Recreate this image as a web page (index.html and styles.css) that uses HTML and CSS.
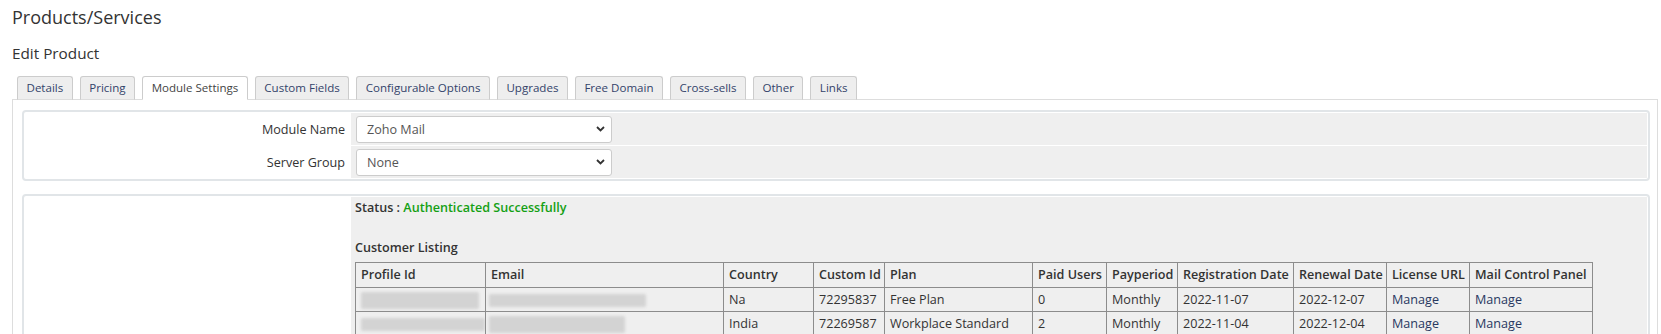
FILE: index.html
```html
<!DOCTYPE html>
<html lang="en">
<head>
<meta charset="utf-8">
<title>Products/Services - Edit Product</title>
<link rel="stylesheet" href="styles.css">
</head>
<body>
  <h1 class="page-title">Products/Services</h1>
  <h2 class="page-subtitle">Edit Product</h2>

  <div class="tabs">
    <a class="tab">Details</a>
    <a class="tab">Pricing</a>
    <a class="tab active">Module Settings</a>
    <a class="tab">Custom Fields</a>
    <a class="tab">Configurable Options</a>
    <a class="tab">Upgrades</a>
    <a class="tab">Free Domain</a>
    <a class="tab">Cross-sells</a>
    <a class="tab">Other</a>
    <a class="tab">Links</a>
  </div>

  <div class="panel">
    <div class="form-box">
      <div class="field-label">Module Name</div>
      <div class="field-area">
        <div class="select">
          <span>Zoho Mail</span>
          <svg class="chev" width="9" height="6" viewBox="0 0 9 6"><path d="M1 1 L4.5 4.5 L8 1" fill="none" stroke="#333" stroke-width="1.8"/></svg>
        </div>
      </div>
      <div class="field-label">Server Group</div>
      <div class="field-area">
        <div class="select">
          <span>None</span>
          <svg class="chev" width="9" height="6" viewBox="0 0 9 6"><path d="M1 1 L4.5 4.5 L8 1" fill="none" stroke="#333" stroke-width="1.8"/></svg>
        </div>
      </div>
    </div>

    <div class="form-box second">
      <div class="field-label"></div>
      <div class="field-area content-area">
        <div class="status">Status : <span class="ok">Authenticated Successfully</span></div>
        <div class="listing-title">Customer Listing</div>
        <table class="listing">
          <colgroup>
            <col style="width:130px"><col style="width:238px"><col style="width:90px"><col style="width:71px">
            <col style="width:148px"><col style="width:74px"><col style="width:71px"><col style="width:116px">
            <col style="width:93px"><col style="width:83px"><col style="width:123px">
          </colgroup>
          <thead>
            <tr>
              <th>Profile Id</th><th>Email</th><th>Country</th><th>Custom Id</th><th>Plan</th>
              <th>Paid Users</th><th>Payperiod</th><th>Registration Date</th><th>Renewal Date</th>
              <th>License URL</th><th>Mail Control Panel</th>
            </tr>
          </thead>
          <tbody>
            <tr>
              <td><span class="blur b1"></span></td>
              <td class="tight"><span class="blur b2"></span></td>
              <td>Na</td><td>72295837</td><td>Free Plan</td><td>0</td><td>Monthly</td>
              <td>2022-11-07</td><td>2022-12-07</td><td><a class="lnk">Manage</a></td><td><a class="lnk">Manage</a></td>
            </tr>
            <tr>
              <td><span class="blur b3"></span></td>
              <td class="tight"><span class="blur b4"></span></td>
              <td>India</td><td>72269587</td><td>Workplace Standard</td><td>2</td><td>Monthly</td>
              <td>2022-11-04</td><td>2022-12-04</td><td><a class="lnk">Manage</a></td><td><a class="lnk">Manage</a></td>
            </tr>
          </tbody>
        </table>
      </div>
    </div>
  </div>
</body>
</html>
```

FILE: styles.css
```css
html, body {
  margin: 0;
  background: #ffffff;
}
body {
  padding: 0 3px 0 12px;
  font-family: "Open Sans", "DejaVu Sans", sans-serif;
  color: #333333;
  overflow: hidden;
}
.page-title {
  margin: 5px 0 0 0;
  font-size: 18px;
  font-weight: 400;
  line-height: 24px;
  color: #333333;
}
.page-subtitle {
  margin: 14px 0 0 0;
  font-size: 15.3px;
  font-weight: 400;
  line-height: 20px;
  color: #333333;
}
.tabs {
  display: flex;
  gap: 7px;
  margin-top: 13px;
  padding-left: 5px;
  position: relative;
  z-index: 1;
  margin-bottom: -1px;
}
.tab {
  display: block;
  height: 24px;
  box-sizing: border-box;
  padding: 3px 8.5px 0 8.5px;
  font-size: 11.55px;
  line-height: 16.7px;
  color: #33436a;
  background: #eeeeee;
  border: 1px solid #cccccc;
  border-bottom: 1px solid #dddddd;
  border-radius: 3px 3px 0 0;
  white-space: nowrap;
}
.tab.active {
  background: #ffffff;
  color: #444444;
  border-bottom-color: #ffffff;
}
.panel {
  border: 1px solid #dddddd;
  padding: 10px 7px 0 9px;
  height: 400px;
}
.form-box {
  display: grid;
  grid-template-columns: 324px 1fr;
  column-gap: 2px;
  row-gap: 1px;
  grid-auto-rows: 32px;
  border: 2px solid #e1e5e8;
  border-radius: 4px;
  padding: 1px;
}
.form-box.second {
  margin-top: 13px;
  grid-auto-rows: auto;
}
.field-label {
  display: flex;
  align-items: center;
  justify-content: flex-end;
  padding-right: 4px;
  font-size: 12.6px;
  color: #333333;
  background: #ffffff;
}
.field-area {
  display: flex;
  align-items: center;
  padding-left: 5px;
  background: #efefef;
}
.select {
  width: 256px;
  height: 27px;
  box-sizing: border-box;
  display: flex;
  align-items: center;
  justify-content: space-between;
  padding: 0 6px 0 10px;
  background: #ffffff;
  border: 1px solid #cccccc;
  border-radius: 3px;
  font-size: 12.6px;
  color: #555555;
}
.chev {
  display: block;
}
.content-area {
  display: block;
  padding: 2px 0 40px 4px;
  font-size: 12.6px;
}
.status {
  font-weight: 600;
  line-height: 18px;
  color: #333333;
}
.status .ok {
  color: #14a014;
}
.listing-title {
  margin-top: 22px;
  font-weight: 600;
  line-height: 18px;
  color: #333333;
}
.listing {
  margin-top: 5px;
  border-collapse: collapse;
  table-layout: fixed;
  width: 1237px;
  font-size: 12.6px;
  color: #333333;
}
.listing th,
.listing td {
  border: 1px solid #8c8c8c;
  text-align: left;
  vertical-align: middle;
  white-space: nowrap;
  overflow: hidden;
}
.listing th {
  font-weight: 600;
  line-height: 18px;
  padding: 3px 5px;
}
.listing td {
  line-height: 18px;
  padding: 2.5px 5px;
}
.listing td.tight {
  padding-left: 3px;
}
.lnk {
  color: #28385f;
  text-decoration: none;
}
.blur {
  display: inline-block;
  vertical-align: middle;
  background: #d3d3d3;
  filter: blur(1.5px);
  border-radius: 2px;
}
.b1 { width: 118px; height: 17px; }
.b2 { width: 157px; height: 13px; }
.b3 { width: 124px; height: 13px; margin-top: 1px; }
.b4 { width: 136px; height: 17px; }
```
